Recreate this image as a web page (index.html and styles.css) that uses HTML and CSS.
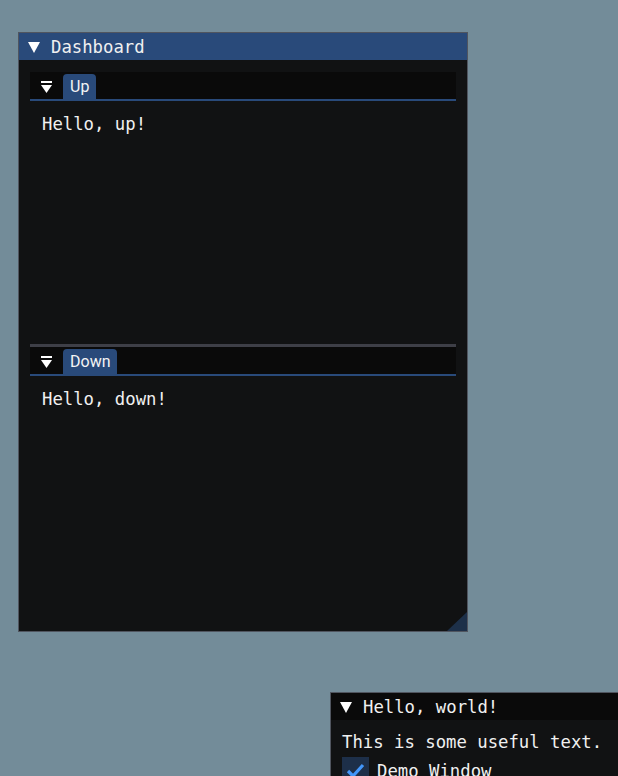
FILE: index.html
```html
<!DOCTYPE html>
<html lang="en">
<head>
    <meta charset="UTF-8">
    <meta name="viewport" content="width=device-width, initial-scale=1.0">
    <title>Dear ImGui Docking</title>
    <link rel="stylesheet" href="styles.css">
</head>
<body>
    <!-- Dashboard window with two docked panes -->
    <div class="window dashboard">
        <div class="titlebar active">
            <svg class="arrow" width="12" height="11" viewBox="0 0 12 11"><polygon points="0,0 12,0 6,11" fill="#fff"/></svg>
            <span>Dashboard</span>
        </div>
        <div class="window-body">
            <div class="dock">
                <div class="pane pane-up">
                    <div class="tabbar">
                        <svg class="node-menu" width="11" height="12" viewBox="0 0 11 12">
                            <rect x="0" y="0" width="11" height="2" fill="#fff"/>
                            <polygon points="0,4 11,4 5.5,12" fill="#fff"/>
                        </svg>
                        <div class="tab">Up</div>
                    </div>
                    <div class="pane-content">Hello, up!</div>
                </div>
                <div class="splitter"></div>
                <div class="pane pane-down">
                    <div class="tabbar">
                        <svg class="node-menu" width="11" height="12" viewBox="0 0 11 12">
                            <rect x="0" y="0" width="11" height="2" fill="#fff"/>
                            <polygon points="0,4 11,4 5.5,12" fill="#fff"/>
                        </svg>
                        <div class="tab">Down</div>
                    </div>
                    <div class="pane-content">Hello, down!</div>
                </div>
            </div>
        </div>
        <svg class="resize-grip" width="20" height="19" viewBox="0 0 20 19"><polygon points="20,0 20,19 0,19" fill="#1d3049"/></svg>
    </div>

    <!-- Hello world window, partly off screen -->
    <div class="window hello">
        <div class="titlebar">
            <svg class="arrow" width="12" height="11" viewBox="0 0 12 11"><polygon points="0,0 12,0 6,11" fill="#fff"/></svg>
            <span>Hello, world!</span>
        </div>
        <div class="window-body">
            <div class="line">This is some useful text.</div>
            <div class="checkbox-row">
                <div class="checkbox">
                    <svg width="27" height="27" viewBox="0 0 27 27"><polyline points="6,14 11,19 21,8" fill="none" stroke="#4296fa" stroke-width="3.2"/></svg>
                </div>
                <span>Demo Window</span>
            </div>
        </div>
    </div>
</body>
</html>
```

FILE: styles.css
```css
body {
    margin: 0;
    background: #738c99;
    width: 618px;
    height: 776px;
    overflow: hidden;
    position: relative;
    font-family: "DejaVu Sans Mono", "Liberation Mono", monospace;
    font-size: 17.3px;
    color: #f0f0f0;
}
.window {
    position: absolute;
    box-sizing: border-box;
    border: 1px solid #50555f;
    background: #111213;
    display: flex;
    flex-direction: column;
}
.dashboard {
    left: 18px;
    top: 32px;
    width: 450px;
    height: 600px;
}
.hello {
    left: 330px;
    top: 692px;
    width: 320px;
    height: 120px;
}
.titlebar {
    height: 27px;
    flex: none;
    display: flex;
    align-items: center;
    padding-left: 9px;
    padding-top: 1px;
    box-sizing: border-box;
    background: #0a0a0a;
    line-height: 26px;
}
.titlebar.active {
    background: #294a7a;
}
.titlebar .arrow {
    margin-right: 11px;
}
.window-body {
    flex: 1;
    padding: 12px 11px 10px 11px;
    display: flex;
    flex-direction: column;
}
.dock {
    flex: 1;
    display: flex;
    flex-direction: column;
}
.pane {
    display: flex;
    flex-direction: column;
}
.pane-up {
    height: 272px;
}
.pane-down {
    flex: 1;
}
.splitter {
    height: 3px;
    background: #3e3f47;
}
.tabbar {
    height: 27px;
    display: flex;
    align-items: flex-end;
    padding-left: 11px;
    background: #0a0a0a;
    border-bottom: 2px solid #294a7a;
}
.node-menu {
    align-self: center;
    margin-top: 2px;
}
.tab {
    height: 25px;
    line-height: 26px;
    margin-left: 11px;
    padding: 0 7px;
    border-radius: 4px 4px 0 0;
    background: #294a7a;
    font-family: Roboto, "Noto Sans", sans-serif;
    font-size: 16px;
    color: #f4f4f4;
}
.pane-content {
    padding: 13px 12px;
    line-height: 21px;
}
.resize-grip {
    position: absolute;
    right: 0;
    bottom: 0;
}
.hello .window-body {
    padding: 12px 11px;
}
.line {
    line-height: 21px;
}
.checkbox-row {
    display: flex;
    align-items: center;
    margin-top: 4px;
}
.checkbox {
    width: 27px;
    height: 27px;
    background: #1d2f49;
    margin-right: 8px;
}
.checkbox svg {
    display: block;
}
```
